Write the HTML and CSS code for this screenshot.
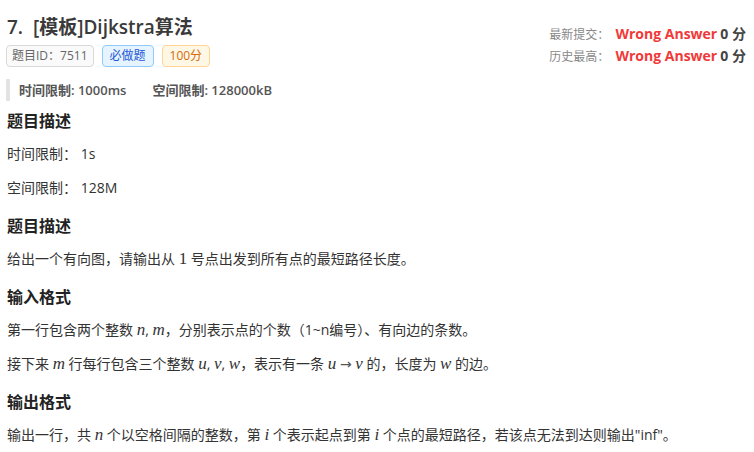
FILE: index.html
```html
<!DOCTYPE html>
<html lang="zh-CN">
<head>
    <meta charset="UTF-8">
    <title>[模板]Dijkstra算法</title>
    <link rel="stylesheet" href="styles.css">
</head>
<body>

<div class="header">
    <div class="header-left">
        <h1 class="title">7.&nbsp; [模板]Dijkstra算法</h1>
        <div class="tags">
            <span class="tag tag-gray">题目ID：7511</span>
            <span class="tag tag-blue">必做题</span>
            <span class="tag tag-orange">100分</span>
        </div>
    </div>
    <div class="status">
        <div class="status-row">
            <span class="status-label">最新提交：</span>
            <span class="verdict">Wrong Answer</span>
            <span class="score">0 分</span>
        </div>
        <div class="status-row">
            <span class="status-label">历史最高：</span>
            <span class="verdict">Wrong Answer</span>
            <span class="score">0 分</span>
        </div>
    </div>
</div>

<div class="limits">
    <span>时间限制: 1000ms</span>
    <span>空间限制: 128000kB</span>
</div>

<div class="content">
    <h2>题目描述</h2>
    <p>时间限制： 1s</p>
    <p>空间限制： 128M</p>

    <h2>题目描述</h2>
    <p>给出一个有向图，请输出从 <span class="math up">1</span> 号点出发到所有点的最短路径长度。</p>

    <h2>输入格式</h2>
    <p>第一行包含两个整数 <span class="math">n</span>, <span class="math">m</span>，分别表示点的个数（1~n编号）、有向边的条数。</p>
    <p>接下来 <span class="math">m</span> 行每行包含三个整数 <span class="math">u</span>, <span class="math">v</span>, <span class="math">w</span>，表示有一条 <span class="math">u</span> <span class="arrow">→</span> <span class="math">v</span> 的，长度为 <span class="math">w</span> 的边。</p>

    <h2>输出格式</h2>
    <p>输出一行，共 <span class="math">n</span> 个以空格间隔的整数，第 <span class="math">i</span> 个表示起点到第 <span class="math">i</span> 个点的最短路径，若该点无法到达则输出"inf"。</p>
</div>

</body>
</html>
```

FILE: styles.css
```css
body {
    margin: 0;
    padding: 12px 8px 0 6px;
    font-family: "Open Sans", "Noto Sans CJK SC", sans-serif;
    color: #333;
    background: #fff;
}

.header {
    display: flex;
    justify-content: space-between;
}

.title {
    margin: 0 0 3px 1px;
    font-size: 19px;
    line-height: 30px;
    font-weight: 600;
    color: #3a3a3a;
}

.tags {
    display: flex;
    gap: 8px;
}

.tag {
    display: inline-block;
    height: 20px;
    line-height: 20px;
    padding: 0 5px;
    font-size: 12px;
    border: 1px solid;
    border-radius: 4px;
}

.tag-gray {
    color: #666;
    background: #fafafa;
    border-color: #d9d9d9;
}

.tag-blue {
    padding: 0 7px;
    color: #1d57d8;
    background: #e6f4ff;
    border-color: #91caff;
}

.tag-orange {
    padding: 0 7px;
    color: #d46b08;
    background: #fff7e6;
    border-color: #ffd591;
}

.status {
    padding-top: 11px;
}

.status-row {
    height: 22px;
    line-height: 22px;
    font-size: 12px;
    color: #888;
}

.verdict {
    margin-left: 3px;
    font-size: 14px;
    font-weight: bold;
    color: #f03a3a;
}

.score {
    font-size: 14px;
    font-weight: bold;
    color: #444;
}

.limits {
    display: flex;
    gap: 26px;
    margin-top: 12px;
    height: 22px;
    line-height: 22px;
    padding-left: 9px;
    border-left: 4px solid #e3e3e3;
    font-size: 13px;
    font-weight: 600;
    color: #555;
}

.content {
    padding-left: 1px;
}

.content h2 {
    margin: 8px 0 11px;
    font-size: 16px;
    line-height: 24px;
    font-weight: bold;
    color: #222;
}

.content p {
    margin: 0 0 14px;
    font-size: 14px;
    line-height: 20px;
    color: #333;
}

.content p + h2 {
    margin-top: 16px;
}

.math {
    font-family: "Liberation Serif", "DejaVu Serif", serif;
    font-style: italic;
    font-size: 17px;
}

.math.up {
    font-style: normal;
}

.arrow {
    font-family: "DejaVu Sans", sans-serif;
    font-size: 14px;
    color: #555;
}
```
